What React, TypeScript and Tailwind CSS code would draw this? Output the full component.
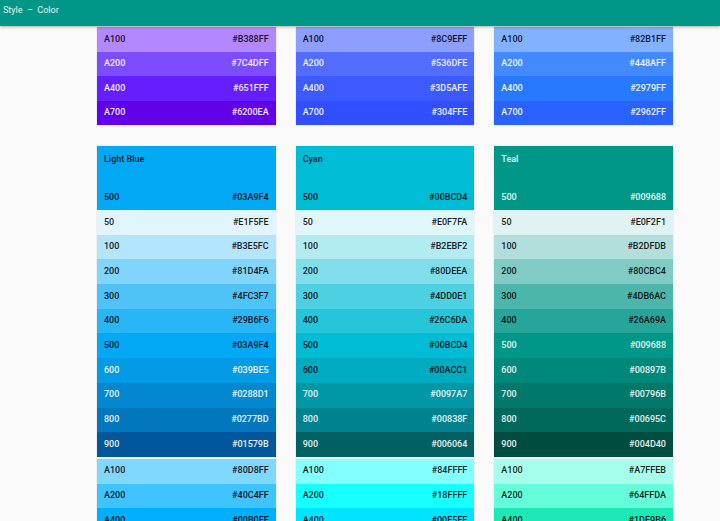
import React from "react";

type Swatch = { name: string; hex: string; light?: boolean };

interface Palette {
	title: string;
	main: string;
	mainLight?: boolean;
	shades: Swatch[];
	accents: Swatch[];
}

// top group: accents of the palettes above, cut off by the app bar
const topGroups: Swatch[][] = [
	[
		{ name: "A100", hex: "#B388FF" },
		{ name: "A200", hex: "#7C4DFF", light: true },
		{ name: "A400", hex: "#651FFF", light: true },
		{ name: "A700", hex: "#6200EA", light: true },
	],
	[
		{ name: "A100", hex: "#8C9EFF" },
		{ name: "A200", hex: "#536DFE", light: true },
		{ name: "A400", hex: "#3D5AFE", light: true },
		{ name: "A700", hex: "#304FFE", light: true },
	],
	[
		{ name: "A100", hex: "#82B1FF" },
		{ name: "A200", hex: "#448AFF", light: true },
		{ name: "A400", hex: "#2979FF", light: true },
		{ name: "A700", hex: "#2962FF", light: true },
	],
];

const palettes: Palette[] = [
	{
		title: "Light Blue",
		main: "#03A9F4",
		shades: [
			{ name: "50", hex: "#E1F5FE" },
			{ name: "100", hex: "#B3E5FC" },
			{ name: "200", hex: "#81D4FA" },
			{ name: "300", hex: "#4FC3F7" },
			{ name: "400", hex: "#29B6F6" },
			{ name: "500", hex: "#03A9F4" },
			{ name: "600", hex: "#039BE5", light: true },
			{ name: "700", hex: "#0288D1", light: true },
			{ name: "800", hex: "#0277BD", light: true },
			{ name: "900", hex: "#01579B", light: true },
		],
		accents: [
			{ name: "A100", hex: "#80D8FF" },
			{ name: "A200", hex: "#40C4FF" },
			{ name: "A400", hex: "#00B0FF" },
			{ name: "A700", hex: "#0091EA", light: true },
		],
	},
	{
		title: "Cyan",
		main: "#00BCD4",
		shades: [
			{ name: "50", hex: "#E0F7FA" },
			{ name: "100", hex: "#B2EBF2" },
			{ name: "200", hex: "#80DEEA" },
			{ name: "300", hex: "#4DD0E1" },
			{ name: "400", hex: "#26C6DA" },
			{ name: "500", hex: "#00BCD4" },
			{ name: "600", hex: "#00ACC1" },
			{ name: "700", hex: "#0097A7", light: true },
			{ name: "800", hex: "#00838F", light: true },
			{ name: "900", hex: "#006064", light: true },
		],
		accents: [
			{ name: "A100", hex: "#84FFFF" },
			{ name: "A200", hex: "#18FFFF" },
			{ name: "A400", hex: "#00E5FF" },
			{ name: "A700", hex: "#00B8D4" },
		],
	},
	{
		title: "Teal",
		main: "#009688",
		mainLight: true,
		shades: [
			{ name: "50", hex: "#E0F2F1" },
			{ name: "100", hex: "#B2DFDB" },
			{ name: "200", hex: "#80CBC4" },
			{ name: "300", hex: "#4DB6AC" },
			{ name: "400", hex: "#26A69A" },
			{ name: "500", hex: "#009688", light: true },
			{ name: "600", hex: "#00897B", light: true },
			{ name: "700", hex: "#00796B", light: true },
			{ name: "800", hex: "#00695C", light: true },
			{ name: "900", hex: "#004D40", light: true },
		],
		accents: [
			{ name: "A100", hex: "#A7FFEB" },
			{ name: "A200", hex: "#64FFDA" },
			{ name: "A400", hex: "#1DE9B6" },
			{ name: "A700", hex: "#00BFA5" },
		],
	},
];

function Row({ swatch, tight }: { swatch: Swatch; tight?: boolean }) {
	return (
		<div
			className={`flex items-center justify-between px-[7px] ${
				tight ? "h-[24.5px]" : "h-[24.7px]"
			} ${swatch.light ? "text-white/90" : "text-black/90"}`}
			style={{ backgroundColor: swatch.hex }}
		>
			<span>{swatch.name}</span>
			<span>{swatch.hex}</span>
		</div>
	);
}

export default function App() {
	return (
		<div
			className="h-[521px] w-[720px] overflow-hidden bg-[#fafafa] text-[9px] font-medium"
			style={{ fontFamily: "Roboto, 'Liberation Sans', sans-serif" }}
		>
			<header className="relative z-10 h-[26px] bg-[#009688] px-[3px] pt-[4px] text-[9px] font-normal text-white/90 shadow-[0_1px_3px_rgba(0,0,0,0.3)]">
				Style&nbsp; –&nbsp; Color
			</header>

			<div className="pl-[97px] pt-px">
				<div className="grid w-[576px] grid-cols-3 gap-x-[20px]">
					{topGroups.map((group, i) => (
						<div key={i} className="shadow-[0_0_1px_rgba(0,0,0,0.25)]">
							{group.map((s) => (
								<Row key={s.name} swatch={s} tight />
							))}
						</div>
					))}
				</div>

				<div className="mt-[21px] grid w-[576px] grid-cols-3 gap-x-[20px]">
					{palettes.map((p) => (
						<div key={p.title} className="flex flex-col">
							<div className="shadow-[0_0_1px_rgba(0,0,0,0.25)]">
								<div
									className={`flex h-[64px] flex-col justify-between px-[7px] pt-[7px] pb-[6px] ${
										p.mainLight ? "text-white/90" : "text-black/90"
									}`}
									style={{ backgroundColor: p.main }}
								>
									<span>{p.title}</span>
									<div className="flex justify-between">
										<span>500</span>
										<span>{p.main}</span>
									</div>
								</div>
								{p.shades.map((s) => (
									<Row key={s.name} swatch={s} />
								))}
							</div>
							<div className="mt-[2px] shadow-[0_0_1px_rgba(0,0,0,0.25)]">
								{p.accents.map((s) => (
									<Row key={s.name} swatch={s} />
								))}
							</div>
						</div>
					))}
				</div>
			</div>
		</div>
	);
}
